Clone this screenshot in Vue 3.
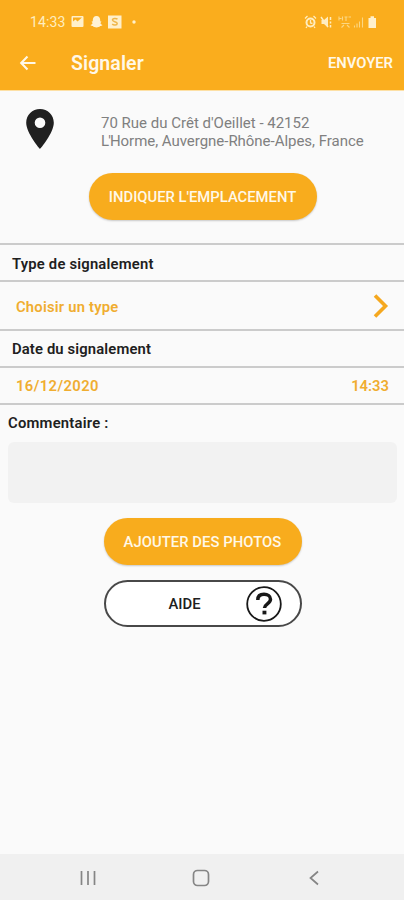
<script setup>
const address = ["70 Rue du Crêt d'Oeillet - 42152", "L'Horme, Auvergne-Rhône-Alpes, France"]
</script>

<template>
  <div class="screen">
    <header class="top">
      <div class="status">
        <span class="clock">14:33</span>
        <svg class="s-left" width="68" height="14" viewBox="0 0 68 14">
          <path fill="#fff0cb" fill-rule="evenodd" d="M1.500 1h10a1 1 0 0 1 1 1v9a1 1 0 0 1-1 1h-10a1 1 0 0 1-1-1V2a1 1 0 0 1 1-1zM2 2.500v4l2.500-2 2 2 4.500-4z" />
          <path fill="#fff3d4" d="M25.500 1c2.500 0 3.700 1.700 3.700 4v1.300l1.300.4-1.100 1.300c.4 1.100 1.100 1.600 2.100 2-.5.9-1.500.9-2.300 1-.8 1.200-2.100.8-3.700 1.600-1.600-.8-2.900-.4-3.700-1.600-.8-.1-1.800-.1-2.300-1 1-.4 1.700-.9 2.100-2l-1.100-1.300 1.300-.4V5c0-2.300 1.200-4 3.700-4z" />
          <rect x="37" y="0.500" width="13.500" height="13" fill="#fff0cb" />
          <path d="M46.500 4.300c-1-1-5-1.300-5 .8 0 2 4.700 1.300 4.700 3.400 0 2-3.700 2-5 .6" fill="none" stroke="#efb64a" stroke-width="1.500" />
          <circle cx="63" cy="7" r="1.700" fill="#fff0cb" />
        </svg>
        <svg class="s-right" width="76" height="14" viewBox="0 0 76 14" fill="none" stroke="#ffedc0">
          <circle cx="6.500" cy="7.500" r="4" stroke-width="2" />
          <path d="M1 3.500 3.500 1M12 3.500 9.500 1M6.500 5v3l2 .5M3 11.500 2 13M10 11.500l1 1.500" stroke-width="1.300" />
          <path d="M17.500 5h2.500l4-3.500v11L20 9h-2.500z" fill="#ffedc0" stroke="none" />
          <path d="M17 2l7 10M26.500 2v3M26.500 6.500v2M26.500 10v2.500" stroke-width="1.500" />
          <g stroke="#fbd783" stroke-width="1.100">
            <path d="M35 1.500v4M35 3.500h2.500M38.500 1.500v4M40.500 2h3M42 2v4M44.500 2h2.500M37.500 8.500h8M40 10l-2.500 2.500M43 10l2.500 2.500" />
            <path d="M50.500 12.500v-2M53 12.500v-4M55.500 12.500v-6M58.500 12.500V2.500" />
          </g>
          <path d="M64.500 3h2V1.200h3.500V3h2v10h-7.500z" fill="#fff0cb" stroke="none" />
        </svg>
      </div>
      <div class="bar">
        <svg class="back" width="18" height="18" viewBox="0 0 18 18"><path d="M16.500 9H2.500M8.500 2.500 2.200 9l6.300 6.500" fill="none" stroke="#fff8e8" stroke-width="2.100" /></svg>
        <h1>Signaler</h1>
        <span class="send">ENVOYER</span>
      </div>
    </header>

    <section class="location">
      <div class="place">
        <svg class="pin" width="28" height="40" viewBox="0 0 28 40"><path fill="#202020" fill-rule="evenodd" d="M14 0C6.300 0 .2 6 .2 13.700.2 24 14 40 14 40s13.800-16 13.800-26.300C27.800 6 21.700 0 14 0zm0 8.500a5.300 5.300 0 1 1 0 10.600 5.300 5.300 0 0 1 0-10.600z" /></svg>
        <p class="address"><span v-for="line in address" :key="line">{{ line }}</span></p>
      </div>
      <button class="pill wide">INDIQUER L'EMPLACEMENT</button>
    </section>

    <div class="row label">Type de signalement</div>
    <div class="row value tall">
      <span class="type">Choisir un type</span>
      <svg width="16" height="24" viewBox="0 0 16 24"><path d="M2 1.500 12.500 12 2 22.500" fill="none" stroke="#f5a81f" stroke-width="3.600" /></svg>
    </div>
    <div class="row label date-label">Date du signalement</div>
    <div class="row value when"><span class="date">16/12/2020</span><span class="time">14:33</span></div>

    <section class="comment">
      <label for="comment">Commentaire :</label>
      <textarea id="comment"></textarea>
    </section>

    <div class="actions">
      <button class="pill photos">AJOUTER DES PHOTOS</button>
      <button class="help">
        <span class="aide">AIDE</span>
        <svg width="36" height="36" viewBox="0 0 36 36" fill="none" stroke="#181818">
          <circle cx="18" cy="18" r="16.800" stroke-width="1.800" />
          <path d="M11.800 14C11.800 9.800 14.300 8.300 18 8.300s6.500 1.700 6.500 5c0 4.400-6 4.600-6 8.700" stroke-width="3.500" />
          <path d="M16.500 24.700h3.900v3.700h-3.900z" fill="#181818" stroke="none" />
        </svg>
      </button>
    </div>

    <nav class="nav">
      <svg width="16" height="16" viewBox="0 0 16 16"><path d="M1.500 1v14M8 1v14M14.500 1v14" stroke="#858585" stroke-width="1.700" /></svg>
      <svg width="18" height="18" viewBox="0 0 18 18"><rect x="1.500" y="1.500" width="15" height="15" rx="4" fill="none" stroke="#858585" stroke-width="1.700" /></svg>
      <svg width="16" height="16" viewBox="0 0 16 16"><path d="M12 1.500 4.500 8l7.500 6.500" fill="none" stroke="#858585" stroke-width="1.700" /></svg>
    </nav>
  </div>
</template>

<style>
body {
  margin: 0;
}
</style>

<style scoped>
.screen {
  width: 404px;
  height: 900px;
  display: flex;
  flex-direction: column;
  overflow: hidden;
  background: #fafafa;
  font-family: Roboto, "Liberation Sans", sans-serif;
  color: #202020;
}
svg {
  display: block;
  flex: none;
}
button {
  border: 0;
  padding: 0;
  font-family: inherit;
  white-space: nowrap;
}
.top {
  height: 91px;
  flex: none;
  background: #faad1d;
  border-bottom: 1px solid #fde0a5;
  box-sizing: border-box;
  color: #fff8e8;
}
.status {
  height: 42px;
  display: flex;
  align-items: center;
  padding: 1px 24px 0 30px;
  box-sizing: border-box;
}
.clock {
  width: 41px;
  font-size: 14px;
  letter-spacing: 0.1px;
  color: #ffedc0;
}
.s-right {
  margin-left: auto;
}
.bar {
  height: 42px;
  display: flex;
  align-items: center;
  padding: 0 11px 0 19px;
}
h1 {
  margin: 0 0 0 34px;
  font-size: 19.500px;
  font-weight: 600;
  letter-spacing: 0.1px;
}
.send {
  margin-left: auto;
  font-size: 14.800px;
  font-weight: 600;
}
.location {
  height: 152px;
  flex: none;
  display: flex;
  flex-direction: column;
  align-items: center;
}
.place {
  align-self: stretch;
  height: 82px;
  display: flex;
  align-items: flex-start;
  padding: 18px 0 0 26px;
  box-sizing: border-box;
}
.address {
  margin: 6px 0 0 47px;
  font-size: 15px;
  line-height: 17.500px;
  color: #808080;
}
.address span {
  display: block;
  white-space: nowrap;
}
.address span:last-child {
  letter-spacing: -0.030px;
}
.address span:last-child::first-letter {
  letter-spacing: -0.900px;
}
.pill {
  height: 47px;
  flex: none;
  border-radius: 24px;
  background: #f8ac1d;
  color: #fff8e8;
  font-size: 14.800px;
  font-weight: 500;
  box-shadow: 0 1px 2px #0003;
}
.wide {
  width: 228px;
  margin-left: 1px;
  padding-top: 1px;
}
.row {
  height: 37px;
  flex: none;
  display: flex;
  align-items: center;
  justify-content: space-between;
  box-sizing: border-box;
  border-top: 2px solid #cbcbcb;
  padding: 2px 12px 0;
  font-size: 14.800px;
  font-weight: 600;
  letter-spacing: 0.200px;
}
.date-label {
  padding-top: 0;
  letter-spacing: 0.140px;
}
.value {
  padding: 2px 15px 0 16px;
  color: #f0ad30;
}
.when {
  padding-top: 1px;
}
.date {
  letter-spacing: 0.400px;
}
.time {
  letter-spacing: 0;
}
.tall {
  height: 49px;
}
.tall svg {
  margin-top: -2px;
}
.comment {
  height: 113px;
  flex: none;
  border-top: 2px solid #cbcbcb;
  box-sizing: border-box;
  padding: 9px 7px 0 8px;
  font-size: 14.800px;
  font-weight: 600;
  letter-spacing: 0.220px;
}
.comment label {
  display: block;
  height: 28px;
  line-height: 19px;
}
.comment textarea {
  display: block;
  width: 100%;
  height: 61px;
  box-sizing: border-box;
  border: 0;
  border-radius: 6px;
  resize: none;
  background: #f2f2f2;
}
.actions {
  display: flex;
  flex-direction: column;
  align-items: center;
  gap: 15px;
  padding: 2px 0 0 1px;
}
.photos {
  width: 198px;
  padding-top: 1px;
  letter-spacing: 0.060px;
}
.help {
  width: 198px;
  height: 47px;
  display: flex;
  align-items: center;
  box-sizing: border-box;
  padding: 0 18px 0 63px;
  justify-content: space-between;
  border: 2px solid #484848;
  border-radius: 24px;
  background: #fff;
  font-size: 14.800px;
  font-weight: 500;
  color: #202020;
}
.aide {
  padding-top: 1px;
}
.nav {
  height: 46px;
  flex: none;
  margin-top: auto;
  background: #f0f0f0;
  display: flex;
  align-items: center;
  justify-content: space-between;
  box-sizing: border-box;
  padding: 2px 82px 0 80px;
}
</style>
